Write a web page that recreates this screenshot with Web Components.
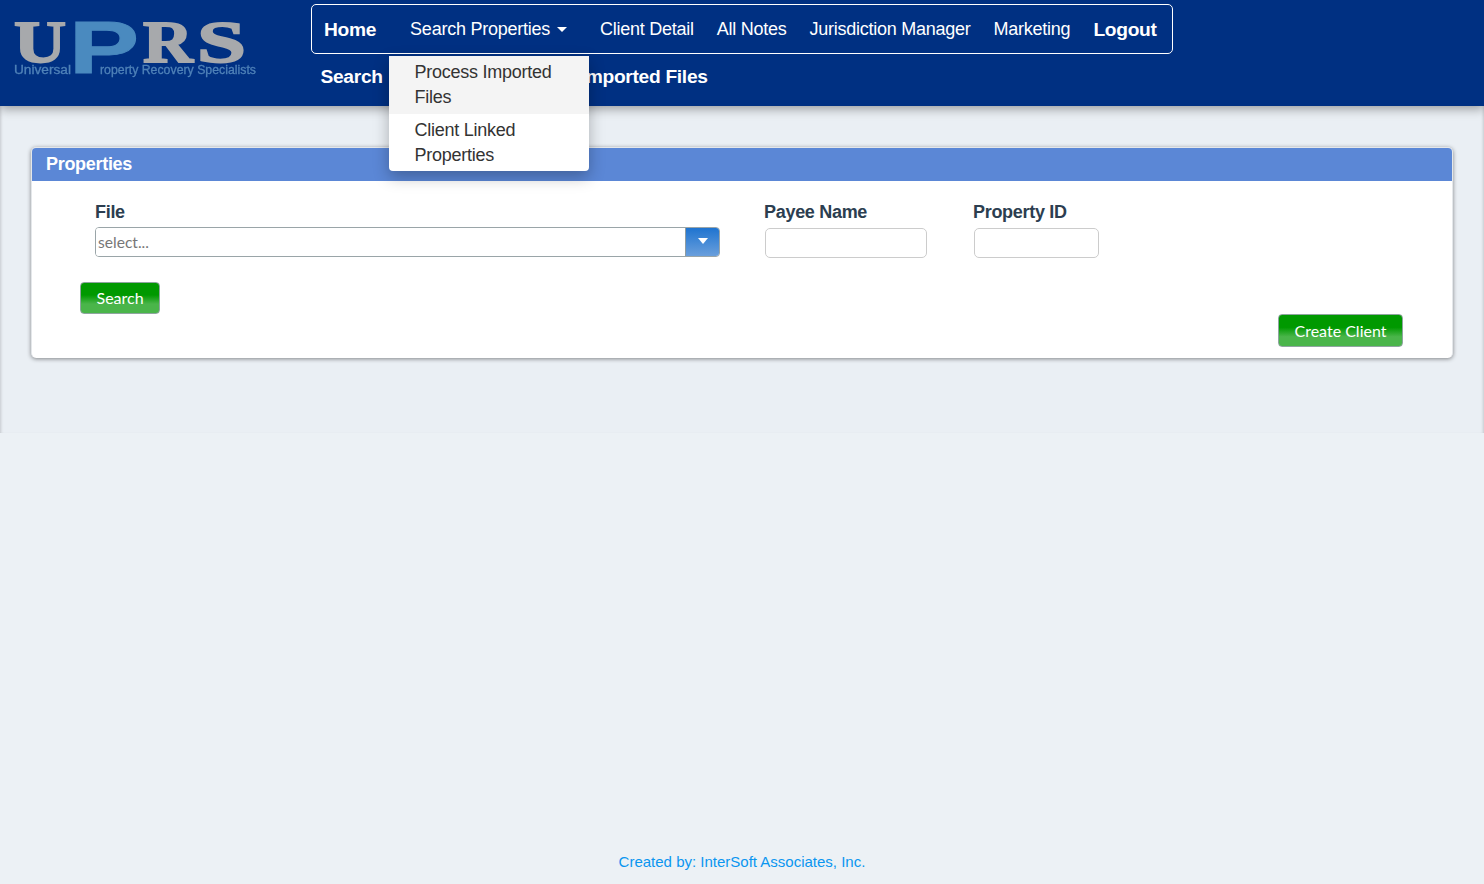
<!DOCTYPE html>
<html>
<head>
<meta charset="utf-8">
<title>Properties</title>
<style>
    html, body {
        margin: 0;
        height: 100%;
        background: #ecf1f5;
    }

    app-page {
        font-family: "Liberation Sans", Arial, sans-serif;
    }
</style>
</head>
<body>
<app-page>
    <site-header slot="header"></site-header>
    <properties-panel slot="content"></properties-panel>
    <site-footer slot="footer">Created by: InterSoft Associates, Inc.</site-footer>
</app-page>

<script>
class AppPage extends HTMLElement {
    constructor() {
        super();
        this.attachShadow({ mode: "open" });
        this.shadowRoot.innerHTML = `
            <style>
                :host {
                    display: flex;
                    flex-direction: column;
                    height: 884px;
                    overflow: hidden;
                }

                #content {
                    height: 327px;
                    padding: 41px 31px 0;
                    box-sizing: border-box;
                    background: #eaeff4;
                    box-shadow: inset 3px 0 3px -2px rgba(0, 0, 0, 0.16), inset -3px 0 3px -2px rgba(0, 0, 0, 0.16);
                }

                #footer {
                    margin-top: auto;
                }
            </style>
            <slot name="header"></slot>
            <div id="content"><slot name="content"></slot></div>
            <div id="footer"><slot name="footer"></slot></div>
        `;
    }
}

class UprsLogo extends HTMLElement {
    constructor() {
        super();
        this.attachShadow({ mode: "open" });
        this.shadowRoot.innerHTML = `
            <style>
                :host {
                    display: block;
                    width: 260px;
                    height: 80px;
                }

                svg {
                    display: block;
                    overflow: visible;
                    filter: blur(0.35px);
                }

                .big {
                    font-family: "Liberation Serif", serif;
                    font-weight: 700;
                    font-size: 59px;
                    fill: #a7a9ac;
                    stroke: #a7a9ac;
                    stroke-width: 1.8px;
                }

                .p {
                    font-family: "Liberation Sans", sans-serif;
                    font-size: 75px;
                    fill: #4a8abf;
                    stroke: #4a8abf;
                    stroke-width: 1px;
                }

                .tag {
                    font-family: "Liberation Sans", sans-serif;
                    font-size: 12.5px;
                    fill: #4f82b8;
                    stroke: #4f82b8;
                    stroke-width: 0.3px;
                }
            </style>
            <svg width="260" height="80" viewBox="0 0 260 80">
                <text class="big" x="14" y="62" textLength="52" lengthAdjust="spacingAndGlyphs">U</text>
                <text class="big p" x="69" y="73" textLength="70" lengthAdjust="spacingAndGlyphs">P</text>
                <text class="big" x="143" y="62" textLength="50" lengthAdjust="spacingAndGlyphs">R</text>
                <text class="big" x="197" y="62" textLength="49" lengthAdjust="spacingAndGlyphs">S</text>
                <text class="tag" x="14" y="74" textLength="57" lengthAdjust="spacingAndGlyphs">Universal</text>
                <text class="tag" x="100" y="74" textLength="156" lengthAdjust="spacingAndGlyphs">roperty Recovery Specialists</text>
            </svg>
        `;
    }
}

class NavDropdown extends HTMLElement {
    constructor() {
        super();
        this.attachShadow({ mode: "open" });
        this.shadowRoot.innerHTML = `
            <style>
                :host {
                    position: absolute;
                    left: 389px;
                    top: 56px;
                    width: 200px;
                    z-index: 10;
                    display: block;
                    background: #fff;
                    border-radius: 0 0 4px 4px;
                    box-shadow: 0 6px 16px rgba(0, 0, 0, 0.28);
                    overflow: hidden;
                    font-size: 18px;
                    letter-spacing: -0.25px;
                    line-height: 25px;
                    color: #333;
                }

                div {
                    padding: 4px 20px 3px 25.5px;
                }

                .hover {
                    background: #f4f4f4;
                    padding-bottom: 4px;
                }
            </style>
            <div class="hover">Process Imported Files</div>
            <div>Client Linked Properties</div>
        `;
    }
}

class SiteHeader extends HTMLElement {
    constructor() {
        super();
        this.attachShadow({ mode: "open" });
        this.shadowRoot.innerHTML = `
            <style>
                :host {
                    display: block;
                    position: relative;
                    z-index: 5;
                    height: 106px;
                    background: #003082;
                    box-shadow: 0 3px 10px rgba(0, 0, 0, 0.35);
                    color: #fff;
                }

                uprs-logo {
                    position: absolute;
                    left: 0;
                    top: 0;
                }

                #wrap {
                    padding: 4px 0 0 311px;
                }

                nav {
                    display: flex;
                    align-items: center;
                    box-sizing: border-box;
                    width: 862px;
                    height: 50px;
                    padding-left: 12px;
                    border: 1px solid #fff;
                    border-radius: 5px;
                    font-size: 18px;
                    letter-spacing: -0.25px;
                    white-space: nowrap;
                }

                nav a {
                    padding: 0 11.5px;
                }

                nav .strong {
                    padding: 2px 0 0;
                    font-size: 19.2px;
                    letter-spacing: -0.3px;
                    font-weight: 700;
                }

                #home {
                    margin-right: 22.5px;
                }

                #toggle {
                    margin-right: 10px;
                }

                #logout {
                    margin-left: 11.5px;
                }

                .caret {
                    display: inline-block;
                    margin-left: 7px;
                    vertical-align: 3px;
                    border-top: 5px solid #fff;
                    border-left: 5px solid transparent;
                    border-right: 5px solid transparent;
                }

                #sub {
                    display: flex;
                    gap: 198px;
                    margin: 11px 0 0 9.5px;
                    font-size: 19.2px;
                    letter-spacing: -0.3px;
                    line-height: 24px;
                    font-weight: 700;
                }
            </style>
            <uprs-logo></uprs-logo>
            <div id="wrap">
                <nav>
                    <a class="strong" id="home">Home</a>
                    <a id="toggle">Search Properties<span class="caret"></span></a>
                    <a>Client Detail</a>
                    <a>All Notes</a>
                    <a>Jurisdiction Manager</a>
                    <a>Marketing</a>
                    <a class="strong" id="logout">Logout</a>
                </nav>
                <div id="sub"><span>Search</span><span>Imported Files</span></div>
            </div>
            <nav-dropdown></nav-dropdown>
        `;
    }
}

class ComboBox extends HTMLElement {
    constructor() {
        super();
        this.attachShadow({ mode: "open" });
        this.shadowRoot.innerHTML = `
            <style>
                :host {
                    display: flex;
                    box-sizing: border-box;
                    height: 30px;
                    border: 1px solid #9aa5a8;
                    border-radius: 4px;
                    overflow: hidden;
                    font-family: Lato, sans-serif;
                    font-size: 15.6px;
                    color: #777;
                }

                #value {
                    flex: 1;
                    padding-left: 2px;
                    line-height: 28px;
                    background: #fff;
                }

                #arrow {
                    display: flex;
                    align-items: center;
                    justify-content: center;
                    width: 33px;
                    border-left: 1px solid #8f9ca0;
                    background: linear-gradient(#1f74d0, #6a9fdc);
                }

                #arrow i {
                    margin-bottom: 3px;
                    border-top: 6px solid #fff;
                    border-left: 5.5px solid transparent;
                    border-right: 5.5px solid transparent;
                }
            </style>
            <div id="value"><slot></slot></div>
            <div id="arrow"><i></i></div>
        `;
    }
}

class TextField extends HTMLElement {
    constructor() {
        super();
        this.attachShadow({ mode: "open" });
        this.shadowRoot.innerHTML = `
            <style>
                :host {
                    display: block;
                    box-sizing: border-box;
                    height: 30px;
                    border: 1px solid #ccc;
                    border-radius: 5px;
                    background: #fff;
                }
            </style>
        `;
    }
}

class GreenButton extends HTMLElement {
    constructor() {
        super();
        this.attachShadow({ mode: "open" });
        this.shadowRoot.innerHTML = `
            <style>
                :host {
                    display: inline-block;
                    box-sizing: border-box;
                    height: 32px;
                    padding: 0 15.5px;
                    border: 1px solid #8fa5a0;
                    border-radius: 4px;
                    background: linear-gradient(#009900 0%, #009900 40%, #4ab54a 70%, #4ab54a 100%);
                    font-family: Lato, sans-serif;
                    font-size: 16px;
                    line-height: 30px;
                    color: #fff;
                }
            </style>
            <slot></slot>
        `;
    }
}

class PropertiesPanel extends HTMLElement {
    constructor() {
        super();
        this.attachShadow({ mode: "open" });
        this.shadowRoot.innerHTML = `
            <style>
                :host {
                    display: block;
                    box-sizing: border-box;
                    width: 1422px;
                    height: 211px;
                    background: #fff;
                    border: 1px solid #e4e7ea;
                    border-bottom: none;
                    border-radius: 5px;
                    box-shadow: 0 1px 4px rgba(0, 0, 0, 0.45);
                    overflow: hidden;
                }

                h3 {
                    margin: -1px 0 0;
                    height: 34px;
                    padding-left: 14px;
                    background: #5b87d6;
                    color: #fff;
                    font-size: 18px;
                    letter-spacing: -0.3px;
                    line-height: 34px;
                    font-weight: 700;
                }

                #fields {
                    display: flex;
                    padding: 20px 0 0 63px;
                }

                label {
                    display: block;
                    margin-bottom: 4px;
                    color: #2c3e50;
                    font-size: 18px;
                    letter-spacing: -0.3px;
                    line-height: 22px;
                    font-weight: 700;
                }

                #file {
                    width: 625px;
                }

                #payee {
                    width: 163px;
                    margin-left: 44px;
                }

                #pid {
                    width: 126px;
                    margin-left: 46px;
                }

                #payee text-field, #pid text-field {
                    margin: 5px 0 0 1px;
                    width: calc(100% - 1px);
                }

                #search {
                    margin: 24px 0 0 48px;
                }

                #create {
                    display: flex;
                    justify-content: flex-end;
                    padding-right: 49px;
                }

                #create green-button {
                    height: 33px;
                    line-height: 32px;
                    padding: 0 15.5px;
                }
            </style>
            <h3>Properties</h3>
            <div id="fields">
                <div id="file">
                    <label>File</label>
                    <combo-box>select...</combo-box>
                </div>
                <div id="payee">
                    <label>Payee Name</label>
                    <text-field></text-field>
                </div>
                <div id="pid">
                    <label>Property ID</label>
                    <text-field></text-field>
                </div>
            </div>
            <div id="search"><green-button>Search</green-button></div>
            <div id="create"><green-button>Create Client</green-button></div>
        `;
    }
}

class SiteFooter extends HTMLElement {
    constructor() {
        super();
        this.attachShadow({ mode: "open" });
        this.shadowRoot.innerHTML = `
            <style>
                :host {
                    display: block;
                    padding-bottom: 12px;
                    text-align: center;
                    color: #0a96f0;
                    font-size: 15px;
                    line-height: 20px;
                }
            </style>
            <slot></slot>
        `;
    }
}

customElements.define("uprs-logo", UprsLogo);
customElements.define("nav-dropdown", NavDropdown);
customElements.define("site-header", SiteHeader);
customElements.define("combo-box", ComboBox);
customElements.define("text-field", TextField);
customElements.define("green-button", GreenButton);
customElements.define("properties-panel", PropertiesPanel);
customElements.define("site-footer", SiteFooter);
customElements.define("app-page", AppPage);
</script>
</body>
</html>
